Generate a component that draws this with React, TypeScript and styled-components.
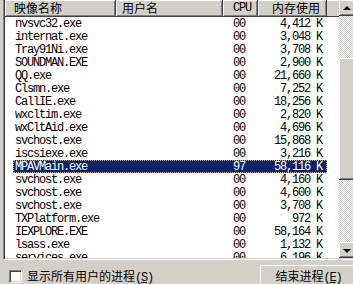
import { FC } from "react";
import styled, { createGlobalStyle, css } from "styled-components";

type ProcessRow = {
  name: string;
  cpu: string;
  mem: string;
  selected?: boolean;
};

const processes: ProcessRow[] = [
  { name: "nvsvc32.exe", cpu: "00", mem: "4,412 K" },
  { name: "internat.exe", cpu: "00", mem: "3,048 K" },
  { name: "Tray91Ni.exe", cpu: "00", mem: "3,708 K" },
  { name: "SOUNDMAN.EXE", cpu: "00", mem: "2,900 K" },
  { name: "QQ.exe", cpu: "00", mem: "21,660 K" },
  { name: "Clsmn.exe", cpu: "00", mem: "7,252 K" },
  { name: "CallIE.exe", cpu: "00", mem: "18,256 K" },
  { name: "wxcltim.exe", cpu: "00", mem: "2,820 K" },
  { name: "wxCltAid.exe", cpu: "00", mem: "4,696 K" },
  { name: "svchost.exe", cpu: "00", mem: "15,868 K" },
  { name: "iscsiexe.exe", cpu: "00", mem: "3,216 K" },
  { name: "MPAVMain.exe", cpu: "97", mem: "58,116 K", selected: true },
  { name: "svchost.exe", cpu: "00", mem: "4,160 K" },
  { name: "svchost.exe", cpu: "00", mem: "4,600 K" },
  { name: "svchost.exe", cpu: "00", mem: "3,708 K" },
  { name: "TXPlatform.exe", cpu: "00", mem: "972 K" },
  { name: "IEXPLORE.EXE", cpu: "00", mem: "58,164 K" },
  { name: "lsass.exe", cpu: "00", mem: "1,132 K" },
  { name: "services.exe", cpu: "00", mem: "6,196 K" },
];

const GlobalStyle = createGlobalStyle`
  body {
    margin: 0;
    background: #d4d0c8;
  }
`;

// SimSun-like half-width latin: 6px advance
const monoText = css`
  font-family: "Liberation Mono", monospace;
  font-size: 12px;
  letter-spacing: -1.2px;
`;

const cjkText = css`
  font-family: "Noto Sans CJK SC", sans-serif;
  font-size: 12px;
`;

const raised = css`
  background: #d4d0c8;
  box-shadow: inset -1px -1px #404040, inset 1px 1px #ffffff,
    inset -2px -2px #808080;
`;

const sunken = css`
  border-top: 1px solid #808080;
  border-left: 1px solid #808080;
  border-right: 1px solid #fff;
  border-bottom: 1px solid #fff;
  box-shadow: inset 1px 1px #404040, inset -1px -1px #d4d0c8;
`;

const Page = styled.div`
  width: 353px;
  height: 284px;
  overflow: hidden;
  display: flex;
  flex-direction: column;
  background: #d4d0c8;
  color: #000;
`;

const ListBox = styled.div`
  ${sunken}
  margin: -2px 0 0 3px;
  width: 354px;
  height: 262px;
  flex-shrink: 0;
  box-sizing: border-box;
  padding: 1px;
  display: flex;
  background: #fff;
`;

const ListArea = styled.div`
  flex: 1;
  overflow: hidden;
  display: flex;
  flex-direction: column;
`;

const HeaderRow = styled.div`
  display: flex;
  height: 17px;
  flex-shrink: 0;
`;

const HeaderCell = styled.div<{
  $w: number;
  $align?: "left" | "right";
  $pad?: number;
  $latin?: boolean;
}>`
  width: ${(p) => p.$w}px;
  box-sizing: border-box;
  height: 17px;
  background: #d4d0c8;
  border-right: 1px solid #404040;
  border-bottom: 1px solid #404040;
  box-shadow: inset 1px 1px #fff, inset -1px -1px #808080;
  line-height: 16px;
  white-space: nowrap;
  text-align: ${(p) => p.$align ?? "left"};
  padding: ${(p) =>
    p.$align === "right" ? `0 ${p.$pad ?? 6}px 0 0` : `0 0 0 ${p.$pad ?? 6}px`};
  ${(p) => (p.$latin ? monoText : cjkText)}
`;

const HeaderFiller = styled.div`
  flex: 1;
  height: 17px;
  box-sizing: border-box;
  background: #d4d0c8;
  border-bottom: 1px solid #404040;
  box-shadow: inset 0 1px #fff;
`;

const Row = styled.div<{ $selected?: boolean }>`
  display: grid;
  grid-template-columns: 103px 107px 35px 69px;
  margin-left: 8px;
  width: 314px;
  height: 13px;
  flex-shrink: 0;
  background: ${(p) => (p.$selected ? "#0a246a" : "transparent")};
  color: ${(p) => (p.$selected ? "#fff" : "#000")};
  ${(p) =>
    p.$selected &&
    css`
      outline: 1px dotted #c8b070;
      outline-offset: -1px;
    `}
`;

const Cell = styled.div<{ $align?: "left" | "right"; $pad?: number }>`
  ${monoText}
  line-height: 13px;
  padding-top: 1px;
  white-space: nowrap;
  overflow: hidden;
  text-align: ${(p) => p.$align ?? "left"};
  ${(p) =>
    p.$align === "right"
      ? css`
          padding-right: ${p.$pad ?? 0}px;
        `
      : css`
          padding-left: ${p.$pad ?? 0}px;
        `}
`;

const ScrollBar = styled.div`
  width: 16px;
  flex-shrink: 0;
  display: flex;
  flex-direction: column;
`;

const ScrollButton = styled.div`
  ${raised}
  height: 16px;
  flex-shrink: 0;
  display: flex;
  align-items: center;
  justify-content: center;
`;

const Arrow = styled.div<{ $dir: "up" | "down" }>`
  width: 0;
  height: 0;
  border-left: 4px solid transparent;
  border-right: 4px solid transparent;
  ${(p) =>
    p.$dir === "up"
      ? css`
          border-bottom: 4px solid #000;
          margin-top: -1px;
        `
      : css`
          border-top: 4px solid #000;
          margin-top: 1px;
        `}
`;

const Track = styled.div`
  flex: 1;
  background-color: #fff;
  background-image: conic-gradient(
    #d4d0c8 25%,
    transparent 0 50%,
    #d4d0c8 0 75%,
    transparent 0
  );
  background-size: 2px 2px;
  padding-top: 42px;
`;

const Thumb = styled.div`
  ${raised}
  height: 122px;
`;

const Footer = styled.div`
  flex: 1;
  display: flex;
  align-items: flex-start;
  justify-content: space-between;
  padding: 5px 0 0 9px;
`;

const CheckLabel = styled.label`
  display: flex;
  align-items: center;
  gap: 5px;
  height: 23px;
  ${cjkText}
  line-height: 13px;
`;

const CheckBox = styled.span`
  ${sunken}
  width: 13px;
  height: 13px;
  box-sizing: border-box;
  background: #fff;
  margin-top: -1px;
`;

const Mnemonic = styled.span`
  ${monoText}
  u {
    text-underline-offset: 1px;
  }
`;

const EndButton = styled.button`
  ${raised}
  border: none;
  width: 97px;
  height: 23px;
  margin-right: -4px;
  padding: 0;
  ${cjkText}
  color: #000;
  line-height: 21px;
  text-align: center;
`;

const App: FC = () => (
  <Page>
    <GlobalStyle />
    <ListBox>
      <ListArea>
        <HeaderRow>
          <HeaderCell $w={111} $pad={9}>
            映像名称
          </HeaderCell>
          <HeaderCell $w={107}>用户名</HeaderCell>
          <HeaderCell $w={35} $pad={10} $latin>
            CPU
          </HeaderCell>
          <HeaderCell $w={69} $align="right" $pad={6}>
            内存使用
          </HeaderCell>
          <HeaderFiller />
        </HeaderRow>
        {processes.map((p, i) => (
          <Row key={i} $selected={p.selected}>
            <Cell $pad={2}>{p.name}</Cell>
            <Cell />
            <Cell $pad={10}>{p.cpu}</Cell>
            <Cell $align="right" $pad={5}>
              {p.mem}
            </Cell>
          </Row>
        ))}
      </ListArea>
      <ScrollBar>
        <ScrollButton>
          <Arrow $dir="up" />
        </ScrollButton>
        <Track>
          <Thumb />
        </Track>
        <ScrollButton>
          <Arrow $dir="down" />
        </ScrollButton>
      </ScrollBar>
    </ListBox>
    <Footer>
      <CheckLabel>
        <CheckBox />
        <span>
          显示所有用户的进程
          <Mnemonic>
            (<u>S</u>)
          </Mnemonic>
        </span>
      </CheckLabel>
      <EndButton>
        结束进程
        <Mnemonic>
          (<u>E</u>)
        </Mnemonic>
      </EndButton>
    </Footer>
  </Page>
);

export default App;
